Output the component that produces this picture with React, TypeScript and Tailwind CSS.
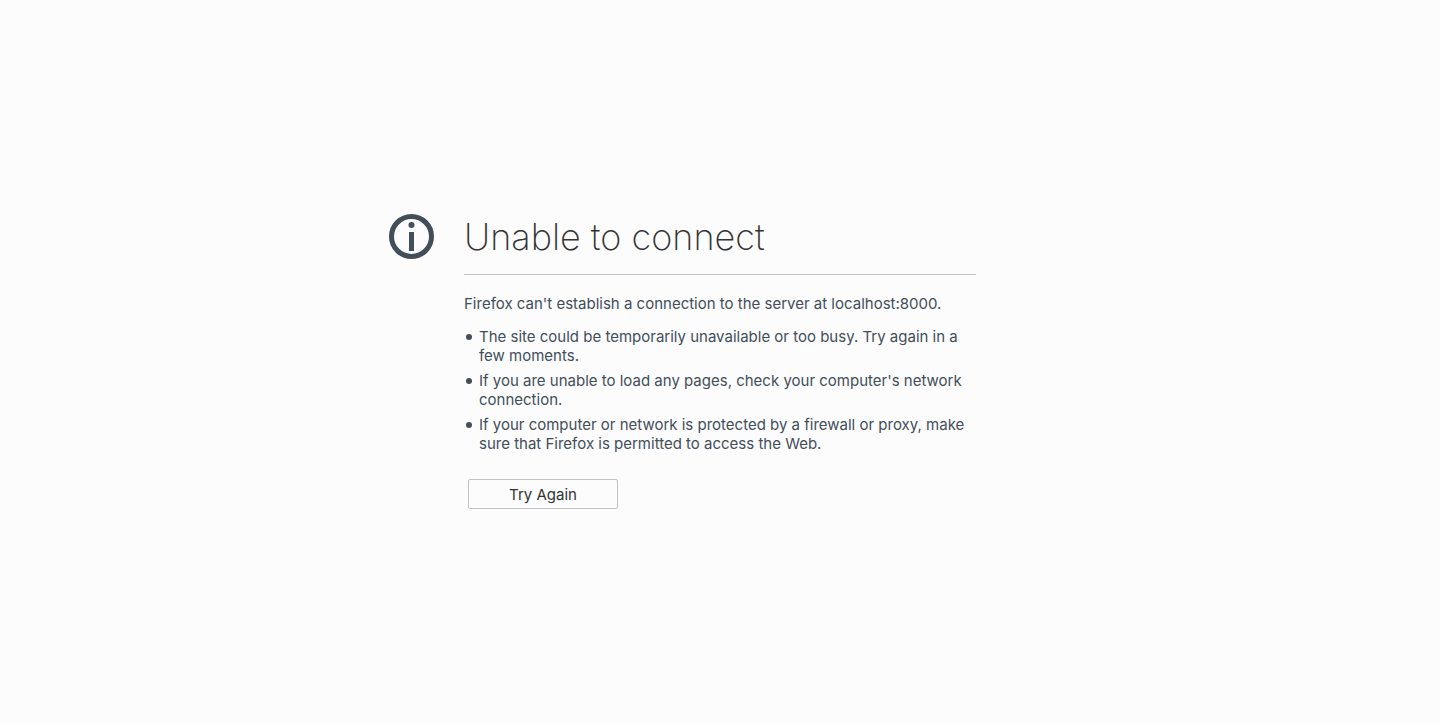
const suggestions = [
  "The site could be temporarily unavailable or too busy. Try again in a few moments.",
  "If you are unable to load any pages, check your computer's network connection.",
  "If your computer or network is protected by a firewall or proxy, make sure that Firefox is permitted to access the Web.",
];

function InfoIcon() {
  return (
    <svg className="size-[45px] shrink-0" viewBox="0 0 45 45" fill="none" aria-hidden="true">
      <circle cx="22.5" cy="22.5" r="20" stroke="#424e5a" strokeWidth="5" />
      <circle cx="22.5" cy="11" r="3" fill="#424e5a" />
      <path d="M20 18h5v19h-5z" fill="#424e5a" />
    </svg>
  );
}

export default function App() {
  return (
    <main className="flex min-h-screen items-center justify-center bg-[#fcfcfc] px-20 font-['Inter',sans-serif] text-[15px] leading-[19px] text-[#424e5a]">
      <div className="w-full max-w-[512px]">
        <header className="-ml-[75px] flex items-start gap-[30px]">
          <InfoIcon />
          <div className="flex-1 border-b border-[#c1c1c1] pb-3.5">
            <h1 className="text-[36px] leading-[46px] font-extralight text-[#333]">Unable to connect</h1>
          </div>
        </header>
        <p className="mt-[19px]">Firefox can't establish a connection to the server at localhost:8000.</p>
        <ul className="mt-3.5 space-y-1.5">
          {suggestions.map((text) => (
            <li
              key={text}
              className="flex before:mt-[7px] before:mr-[7px] before:ml-0.5 before:size-1.5 before:shrink-0 before:rounded-full before:bg-[#424e5a]"
            >
              <span>{text}</span>
            </li>
          ))}
        </ul>
        <button
          type="button"
          className="mt-[26px] ml-1 h-[30px] w-[150px] rounded-xs border border-[#c1c1c1] bg-[#fcfcfc] text-[#333]"
        >
          Try Again
        </button>
      </div>
    </main>
  );
}
